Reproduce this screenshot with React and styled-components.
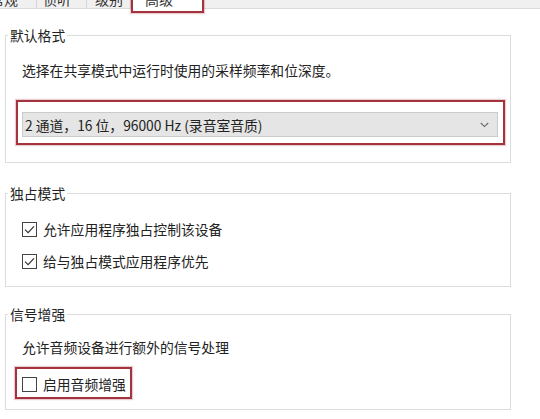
import React from "react";
import styled, { createGlobalStyle } from "styled-components";

const RED = "#a3343f";

const GlobalStyle = createGlobalStyle`
  body {
    margin: 0;
    background: #fff;
    font-family: "Noto Sans CJK SC", "Noto Sans", sans-serif;
    color: #222;
  }
`;

const Page = styled.div`
  width: 540px;
  height: 419px;
  overflow: hidden;
  background: #fff;
`;

const TabBar = styled.div`
  display: flex;
  align-items: flex-start;
  height: 13px;
  margin-left: -24px;
  background: linear-gradient(#f0f0f0 0 8px, #dcdcdc 8px 9px, #fff 9px);
`;

const Tab = styled.div`
  box-sizing: border-box;
  width: ${(p) => p.$width}px;
  height: ${(p) => (p.$active ? 13 : 9)}px;
  padding-left: ${(p) => p.$pad}px;
  overflow: hidden;
  background: ${(p) => (p.$active ? "#fff" : "transparent")};
  border-right: 1px solid #d6d6d6;
  ${(p) =>
    p.$active &&
    `
    border: 2px solid ${RED};
    border-top: 0;
    box-shadow: 0 0 1px 1px rgba(190, 90, 100, 0.3);
  `}
`;

const TabLabel = styled.div`
  margin-top: -8px;
  font-size: 14px;
  line-height: 14px;
  white-space: nowrap;
  color: #333;
`;

const Group = styled.fieldset`
  margin: ${(p) => p.$top}px 29px 0 5px;
  padding: 0;
  min-width: 0;
  border: 1px solid #dcdcdc;
`;

const Legend = styled.legend`
  margin-left: 2px;
  padding: 0 2px;
  font-size: 13.8px;
  line-height: 20px;
  color: #222;
`;

const GroupBody = styled.div`
  padding: ${(p) => p.$pad};
`;

const Text = styled.div`
  font-size: 13.8px;
  line-height: 20px;
  white-space: nowrap;
  color: #222;
`;

const Highlight = styled.div`
  border: 2px solid ${RED};
  box-shadow: 0 0 1px 1px rgba(190, 90, 100, 0.3);
  margin: ${(p) => p.$margin};
  padding: ${(p) => p.$pad};
  width: ${(p) => (p.$fit ? "fit-content" : "auto")};
`;

const Combo = styled.div`
  box-sizing: border-box;
  height: 25px;
  display: flex;
  align-items: center;
  justify-content: space-between;
  padding: 0 8px 0 2px;
  background: #e5e5e5;
  border: 1px solid #cbcbcb;
  font-size: 13.8px;
  color: #222;
  white-space: nowrap;
`;

const CheckList = styled.div`
  display: flex;
  flex-direction: column;
  gap: 12px;
`;

const CheckRow = styled.div`
  display: flex;
  align-items: center;
  gap: 6px;
  height: 20px;
`;

const Box = styled.svg`
  flex: none;
  display: block;
`;

const Checkbox = ({ checked }) => (
  <Box width="15" height="15" viewBox="0 0 15 15">
    <rect x="0.5" y="0.5" width="14" height="14" fill="#fff" stroke="#444" />
    {checked && (
      <path d="M3 7.6 L6.1 10.6 L12 4.3" fill="none" stroke="#333" strokeWidth="1.2" />
    )}
  </Box>
);

const Chevron = () => (
  <svg width="9" height="6" viewBox="0 0 9 6">
    <path d="M0.8 1 L4.5 4.6 L8.2 1" fill="none" stroke="#666" strokeWidth="1.1" />
  </svg>
);

const tabs = [
  { label: "常规", width: 61, pad: 14 },
  { label: "侦听", width: 50, pad: 6 },
  { label: "级别", width: 44, pad: 8 },
  { label: "高级", width: 73, pad: 12, active: true },
];

export default function App() {
  return (
    <Page>
      <GlobalStyle />
      <TabBar>
        {tabs.map((t) => (
          <Tab key={t.label} $width={t.width} $pad={t.pad} $active={t.active}>
            <TabLabel>{t.label}</TabLabel>
          </Tab>
        ))}
      </TabBar>

      <Group $top={12}>
        <Legend>默认格式</Legend>
        <GroupBody $pad="15px 0 17px 16px">
          <Text>选择在共享模式中运行时使用的采样频率和位深度。</Text>
          <Highlight $margin="20px 5px 0 -6px" $pad="10px 5px 6px 4px">
            <Combo>
              <span>2 通道，16 位，96000 Hz (录音室音质)</span>
              <Chevron />
            </Combo>
          </Highlight>
        </GroupBody>
      </Group>

      <Group $top={20}>
        <Legend>独占模式</Legend>
        <GroupBody $pad="16px 0 15px 16px">
          <CheckList>
            <CheckRow>
              <Checkbox checked />
              <Text>允许应用程序独占控制该设备</Text>
            </CheckRow>
            <CheckRow>
              <Checkbox checked />
              <Text>给与独占模式应用程序优先</Text>
            </CheckRow>
          </CheckList>
        </GroupBody>
      </Group>

      <Group $top={17}>
        <Legend>信号增强</Legend>
        <GroupBody $pad="13px 0 10px 16px">
          <Text>允许音频设备进行额外的信号处理</Text>
          <Highlight $fit $margin="10px 0 0 -7px" $pad="5px 4px 3px 5px">
            <CheckRow>
              <Checkbox />
              <Text>启用音频增强</Text>
            </CheckRow>
          </Highlight>
        </GroupBody>
      </Group>
    </Page>
  );
}
